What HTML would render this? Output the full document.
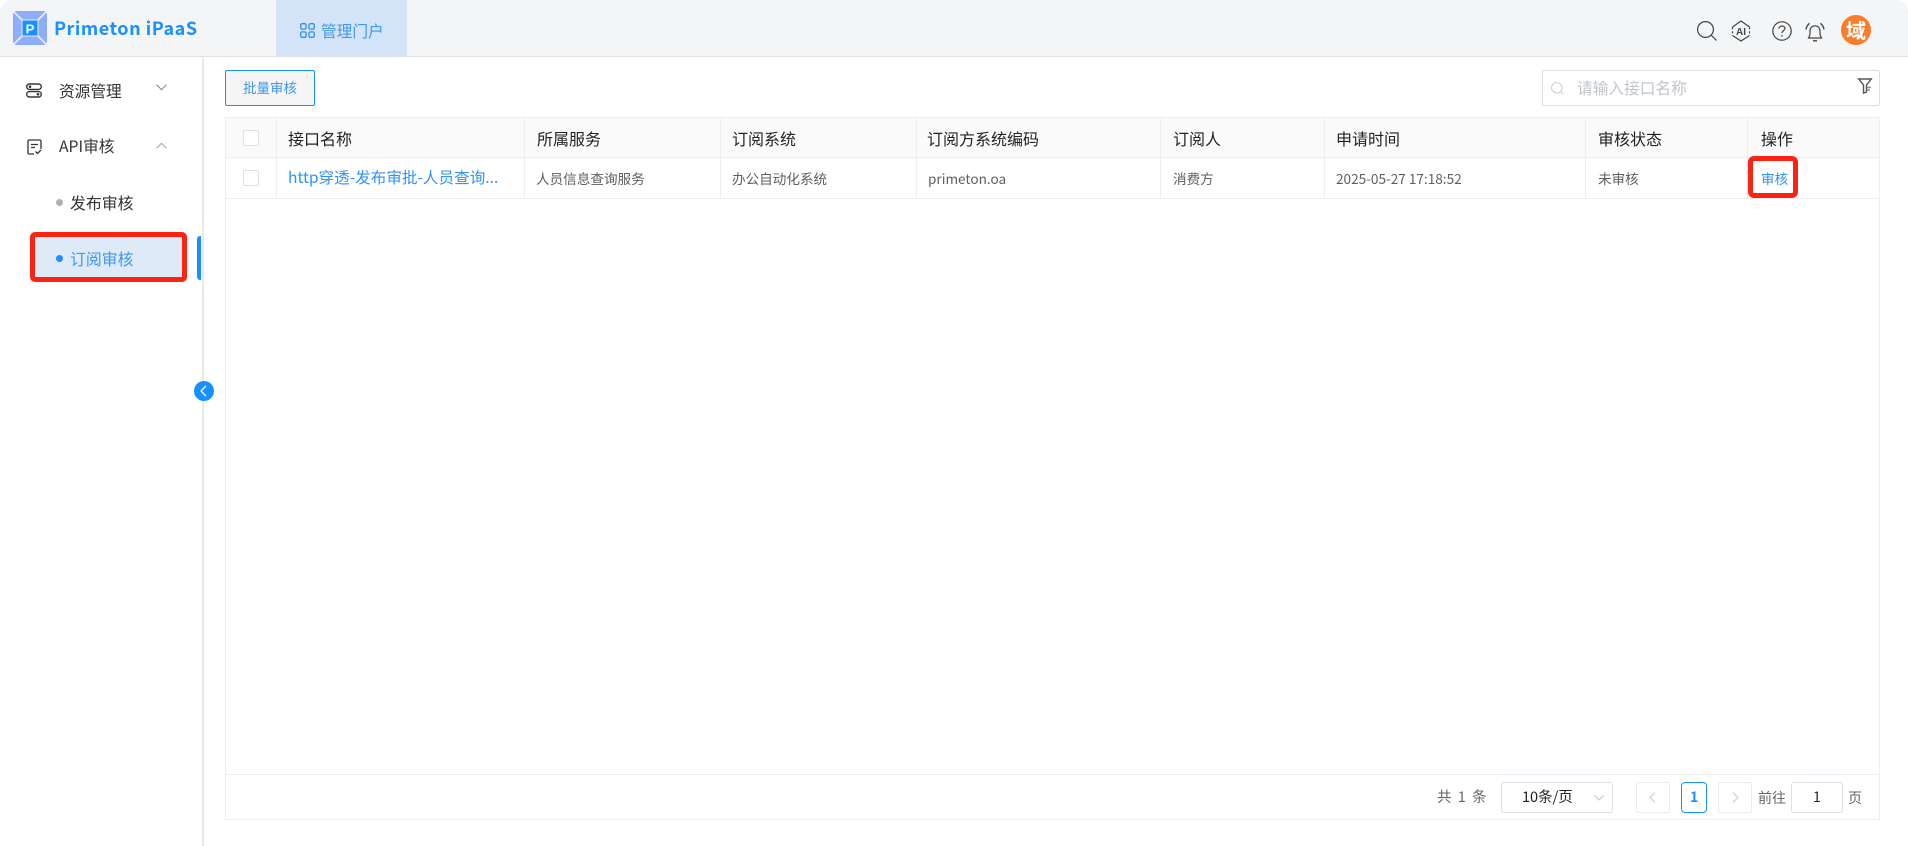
<!DOCTYPE html>
<html lang="zh-CN"><head><meta charset="utf-8"><title>Primeton iPaaS</title>
<style>
html,body{margin:0;padding:0;width:1908px;height:846px;overflow:hidden;background:#fff;font-family:"Noto Sans CJK SC","Liberation Sans",sans-serif;}
.a{position:absolute;white-space:nowrap;line-height:1;}
.box{position:absolute;box-sizing:border-box;}
svg{position:absolute;overflow:visible;}
.th{font-size:16px;color:#222;top:130px;}
.td{font-size:13.6px;color:#5f5f5f;top:172px;}
.v{position:absolute;width:1px;top:118px;height:80px;background:#eceef4;}
.cb{position:absolute;left:243px;width:16px;height:16px;box-sizing:border-box;border:1px solid #dcdfe6;border-radius:2px;background:#fff;}
</style></head><body>
<div class="box" style="left:0;top:0;width:1908px;height:846px;background:#fff;border-radius:12px;overflow:hidden;">
<div class="box" style="left:0;top:0;width:1908px;height:57px;background:#f4f5f7;border-bottom:1px solid #dfdfe2;"></div>
<svg style="left:13px;top:11px" width="34" height="34" viewBox="0 0 34 34">
<rect width="34" height="34" rx="3" fill="#8fadfb"/>
<path d="M0 0L9 9M34 0L25 9M0 34L9 25M34 34L25 25" stroke="#e8effd" stroke-width="1.6"/>
<rect x="9" y="9" width="16" height="16" fill="#1890ff" stroke="#e8effd" stroke-width="1"/>
<text x="17" y="22.5" text-anchor="middle" font-size="13" font-weight="700" fill="#fff" font-family="Liberation Sans">P</text>
</svg>
<div class="a" style="left:54px;top:19px;font-size:18px;font-weight:700;color:#1890ff;letter-spacing:.52px;">Primeton iPaaS</div>
<div class="box" style="left:276px;top:0;width:131px;height:56px;background:#d3e4f8;"></div>
<svg style="left:300px;top:23px" width="15" height="15" viewBox="0 0 15 15" fill="none" stroke="#2f8fec" stroke-width="1.3">
<rect x=".7" y=".7" width="5.4" height="5.4" rx="1.5"/><rect x="8.9" y=".7" width="5.4" height="5.4" rx="1.5"/><rect x=".7" y="8.9" width="5.4" height="5.4" rx="1.5"/><rect x="8.9" y="8.9" width="5.4" height="5.4" rx="1.5"/></svg>
<div class="a" style="left:321px;top:23px;font-size:15.7px;color:#3f97f0;">管理门户</div>
<svg style="left:1697px;top:21px" width="20" height="20" viewBox="0 0 20 20" fill="none" stroke="#444" stroke-width="1.2"><circle cx="8.500" cy="8.500" r="7.900"/><path d="M14.200 14.200L19.500 19.500"/></svg>
<svg style="left:1731px;top:20px" width="20" height="22" viewBox="0 0 20 22" fill="none" stroke="#444" stroke-width="1.2"><path d="M1.500 7L10 1L18.500 7M18.500 15.500L10 21L1.500 15.500"/><path d="M1.500 7V15.500M18.500 7V15.500" stroke-width="1.200" stroke-dasharray="2.2 2"/><text x="10" y="14.800" text-anchor="middle" font-size="10" font-weight="700" fill="#444" stroke="none" font-family="Liberation Sans">AI</text></svg>
<svg style="left:1772px;top:21px" width="20" height="20" viewBox="0 0 20 20" fill="none" stroke="#444" stroke-width="1.2"><circle cx="10" cy="10" r="9.2"/><path d="M7 7.7C7 5.9 8.4 5 10 5C11.8 5 13 6 13 7.5C13 9.5 10 9.6 10 12"/><circle cx="10" cy="14.8" r=".8" fill="#444" stroke="none"/></svg>
<svg style="left:1805px;top:22px" width="20" height="21" viewBox="0 0 20 21" fill="none" stroke="#444" stroke-width="1.2"><path d="M3.5 16C5 13.5 5 12.5 5 9C5 6 7 3.8 10 3.8C13 3.8 15 6 15 9C15 12.5 15 13.5 16.5 16Z"/><path d="M1 7.5C1.5 4.5 3 2.5 4.5 1.3M19 7.5C18.500 4.500 17 2.500 15.500 1.300M8 18.800H12" stroke-width="1.400"/></svg>
<div class="box" style="left:1841px;top:15px;width:30px;height:30px;border-radius:50%;background:#fb7d2c;"></div>
<div class="a" style="left:1846px;top:20px;font-size:20px;font-weight:700;color:#fff;">域</div>

<div class="box" style="left:202px;top:57px;width:2px;height:789px;background:#e9e9ec;"></div>
<svg style="left:26px;top:83px" width="16" height="15" viewBox="0 0 16 15" fill="none" stroke="#333" stroke-width="1.4"><rect x=".7" y="1" width="14.6" height="5.400" rx="2.700"/><rect x=".7" y="8.600" width="14.6" height="5.400" rx="2.700"/><circle cx="4" cy="3.700" r=".6" fill="#333"/><circle cx="12" cy="11.300" r=".6" fill="#333"/></svg>
<div class="a" style="left:59px;top:83px;font-size:15.700px;color:#333;">资源管理</div>
<svg style="left:156px;top:84px" width="11" height="7" viewBox="0 0 11 7" fill="none" stroke="#777" stroke-width="1"><path d="M.5 .7L5.500 5.700L10.500 .7"/></svg>
<svg style="left:27px;top:139px" width="15" height="16" viewBox="0 0 15 16" fill="none" stroke="#333" stroke-width="1.300"><path d="M7 15H2.500Q1 15 1 13.500V2.500Q1 1 2.500 1H12.500Q14 1 14 2.500V10"/><path d="M4 5.500H11M4 8.500H8M8.500 12.500L10.500 14.500L14 11"/></svg>
<div class="a" style="left:59px;top:138px;font-size:15.700px;color:#333;">API审核</div>
<svg style="left:156px;top:142px" width="11" height="7" viewBox="0 0 11 7" fill="none" stroke="#999" stroke-width="1"><path d="M.5 6.300L5.500 1.300L10.500 6.300"/></svg>
<div class="box" style="left:56px;top:199px;width:7px;height:7px;border-radius:50%;background:#b0b0b0;"></div>
<div class="a" style="left:70px;top:195px;font-size:15.900px;color:#333;">发布审核</div>
<div class="box" style="left:30px;top:232px;width:157px;height:50px;background:#deeaf7;border:5px solid #fb2312;border-radius:5px;"></div>
<div class="box" style="left:56px;top:255px;width:7px;height:7px;border-radius:50%;background:#1890ff;"></div>
<div class="a" style="left:70px;top:251px;font-size:15.900px;color:#3f97f0;">订阅审核</div>
<div class="box" style="left:197px;top:236px;width:4px;height:44px;border-radius:3px 0 0 3px;background:#1890ff;"></div>
<div class="box" style="left:194px;top:381px;width:20px;height:20px;border-radius:50%;background:#1890ff;"></div>
<svg style="left:200px;top:385px" width="7" height="12" viewBox="0 0 7 12" fill="none" stroke="#fff" stroke-width="1.300"><path d="M6 .8L1 6L6 11.200"/></svg>

<div class="box" style="left:225px;top:70px;width:90px;height:36px;background:#f5f5f5;border:1px solid #1890ff;border-radius:2px;"></div>
<div class="a" style="left:243px;top:81px;font-size:13.500px;color:#3f97f0;">批量审核</div>
<div class="box" style="left:1542px;top:70px;width:338px;height:36px;background:#fff;border:1px solid #dcdfe6;border-radius:2px;"></div>
<svg style="left:1551px;top:82px" width="13" height="13" viewBox="0 0 13 13" fill="none" stroke="#c8ccd4" stroke-width="1"><circle cx="5.800" cy="5.800" r="5.200"/><path d="M9.500 9.500L12.300 12.300"/></svg>
<div class="a" style="left:1577px;top:80px;font-size:15.700px;color:#c0c4cc;">请输入接口名称</div>
<svg style="left:1858px;top:78px" width="14" height="16" viewBox="0 0 14 16" fill="none" stroke="#555" stroke-width="1.400"><path d="M.7 1H13.300L8.500 7V14L5.500 15V7Z"/><path d="M9 9.500H13M9 12H12" stroke="#7b93b5"/></svg>

<div class="box" style="left:225px;top:117px;width:1655px;height:703px;border:1px solid #eceef4;background:#fff;"></div>
<div class="box" style="left:226px;top:118px;width:1653px;height:39px;background:#fafafa;"></div>
<div class="box" style="left:226px;top:157px;width:1653px;height:1px;background:#eceef4;"></div>
<div class="box" style="left:226px;top:198px;width:1653px;height:1px;background:#eceef4;"></div>
<div class="box" style="left:226px;top:774px;width:1653px;height:1px;background:#eceef4;"></div>
<div class="v" style="left:276px"></div><div class="v" style="left:524px"></div><div class="v" style="left:720px"></div><div class="v" style="left:916px"></div><div class="v" style="left:1160px"></div><div class="v" style="left:1324px"></div><div class="v" style="left:1585px"></div><div class="v" style="left:1747px"></div>
<div class="cb" style="top:130px"></div><div class="cb" style="top:170px"></div>
<div class="a th" style="left:288px">接口名称</div>
<div class="a th" style="left:537px">所属服务</div>
<div class="a th" style="left:732px">订阅系统</div>
<div class="a th" style="left:927px">订阅方系统编码</div>
<div class="a th" style="left:1173px">订阅人</div>
<div class="a th" style="left:1336px">申请时间</div>
<div class="a th" style="left:1598px">审核状态</div>
<div class="a th" style="left:1761px">操作</div>
<div class="a" style="left:288px;top:170px;font-size:15.600px;color:#2f93f5;">http穿透-发布审批-人员查询...</div>
<div class="a td" style="left:536px">人员信息查询服务</div>
<div class="a td" style="left:732px">办公自动化系统</div>
<div class="a td" style="left:928px">primeton.oa</div>
<div class="a td" style="left:1173px">消费方</div>
<div class="a td" style="left:1336px">2025-05-27 17:18:52</div>
<div class="a td" style="left:1598px">未审核</div>
<div class="box" style="left:1748px;top:156px;width:50px;height:42px;border:5px solid #fb2312;border-radius:6px;"></div>
<div class="a td" style="left:1761px;color:#2f93f5">审核</div>

<div class="a" style="left:1437px;top:790px;font-size:14.500px;word-spacing:3px;color:#666;">共 1 条</div>
<div class="box" style="left:1501px;top:782px;width:112px;height:31px;border:1px solid #dcdfe6;border-radius:3px;"></div>
<div class="a" style="left:1522px;top:790px;font-size:14.500px;color:#222;">10条/页</div>
<svg style="left:1594px;top:795px" width="10" height="6" viewBox="0 0 10 6" fill="none" stroke="#c0c4cc" stroke-width="1"><path d="M.5 .5L5 5L9.500 .5"/></svg>
<div class="box" style="left:1636px;top:782px;width:34px;height:31px;border:1px solid #e8eaf0;border-radius:2px;"></div>
<svg style="left:1649px;top:792px" width="7" height="11" viewBox="0 0 7 11" fill="none" stroke="#d3dae6" stroke-width="1.500"><path d="M6 .7L1 5.500L6 10.300"/></svg>
<div class="box" style="left:1681px;top:782px;width:26px;height:31px;border:1px solid #1890ff;border-radius:4px;"></div>
<div class="a" style="left:1690px;top:790px;font-size:14px;font-weight:700;color:#1890ff;">1</div>
<div class="box" style="left:1718px;top:782px;width:34px;height:31px;border:1px solid #e8eaf0;border-radius:2px;"></div>
<svg style="left:1732px;top:792px" width="7" height="11" viewBox="0 0 7 11" fill="none" stroke="#d3dae6" stroke-width="1.500"><path d="M1 .7L6 5.500L1 10.300"/></svg>
<div class="a" style="left:1758px;top:791px;font-size:14px;color:#666;">前往</div>
<div class="box" style="left:1791px;top:782px;width:52px;height:31px;border:1px solid #dcdfe6;border-radius:3px;"></div>
<div class="a" style="left:1813px;top:790px;font-size:14px;color:#222;">1</div>
<div class="a" style="left:1848px;top:791px;font-size:14px;color:#666;">页</div>
</div>
</body></html>
